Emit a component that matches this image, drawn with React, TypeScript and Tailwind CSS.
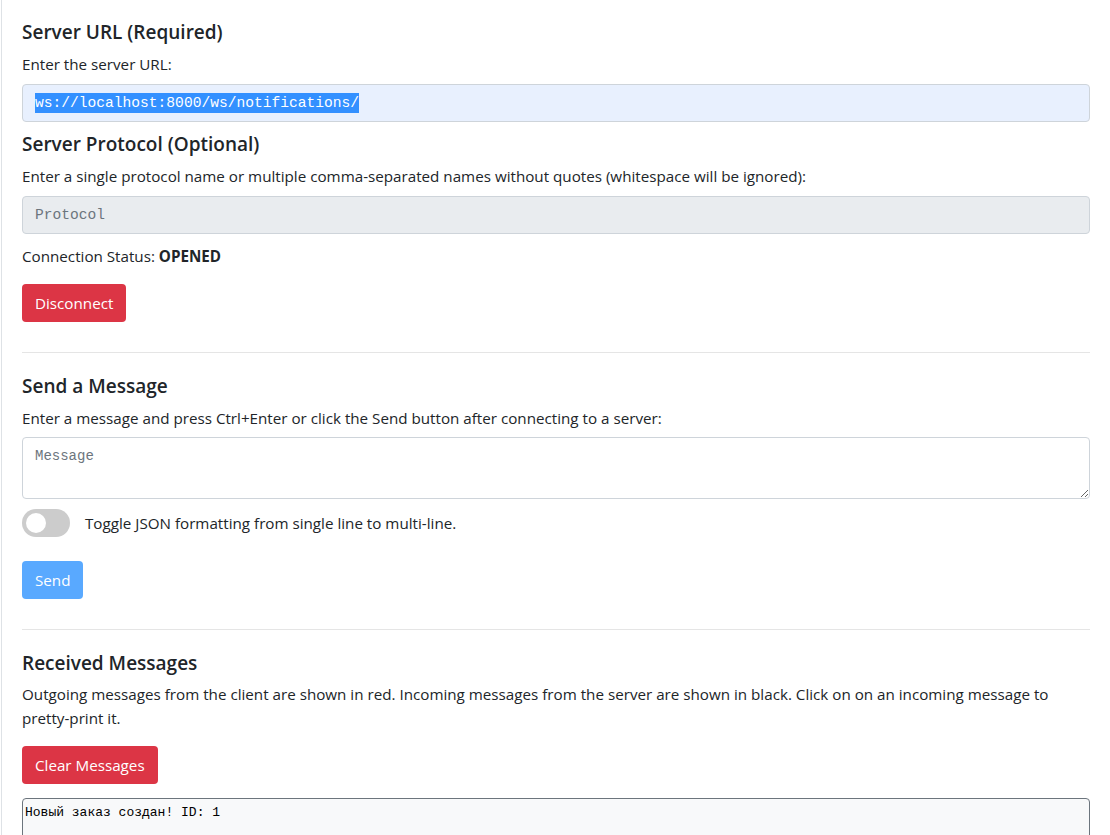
import React from 'react';

const sans = "font-['Open_Sans',sans-serif]";

function Heading({ children, className = '' }: { children: React.ReactNode; className?: string }) {
  return (
    <h5 className={`text-[19px] font-semibold leading-[24px] text-[#212529] ${className}`}>{children}</h5>
  );
}

function Divider() {
  return <hr className="mt-[30px] mb-[21px] border-0 border-t border-[#e5e5e5]" />;
}

export default function App() {
  return (
    <div className={`min-h-[835px] bg-white text-[15.2px] leading-[24px] text-[#212529] ${sans}`}>
      <div className="ml-px border-l border-[#dee2e6] pl-[20px] pr-[20px] pt-[20px] min-h-[835px]">
        {/* server url */}
        <Heading>Server URL (Required)</Heading>
        <p className="mt-[8px] mb-[8px]">Enter the server URL:</p>
        <div className="flex h-[38px] items-center rounded border border-[#ced4da] bg-[#e8f0fe] px-[12px] font-['Liberation_Mono',monospace] text-[14.6px]">
          <span className="bg-[#3390ff] text-white leading-[20px]">ws://localhost:8000/ws/notifications/</span>
        </div>

        <Heading className="mt-[10px]">Server Protocol (Optional)</Heading>
        <p className="mt-[8px] mb-[8px]">
          Enter a single protocol name or multiple comma-separated names without quotes (whitespace will be ignored):
        </p>
        <div className="flex h-[38px] items-center rounded border border-[#ced4da] bg-[#e9ecef] px-[12px] font-['Liberation_Mono',monospace] text-[14.6px] text-[#6c757d]">
          Protocol
        </div>

        <p className="mt-[10px] mb-[16px]">
          Connection Status: <b className="font-bold">OPENED</b>
        </p>
        <button
          type="button"
          className="h-[38px] rounded bg-[#dc3545] px-[13px] text-white"
        >
          Disconnect
        </button>

        <Divider />

        {/* send */}
        <Heading>Send a Message</Heading>
        <p className="mt-[8px] mb-[7px]">
          Enter a message and press Ctrl+Enter or click the Send button after connecting to a server:
        </p>
        <textarea
          rows={2}
          placeholder="Message"
          className="block h-[62px] w-full rounded border border-[#ced4da] bg-white px-[12px] py-[6px] font-['Liberation_Mono',monospace] text-[14px] leading-[24px] placeholder:text-[#6c757d] outline-none"
        />
        <div className="mt-[10px] flex items-center gap-[15px]">
          <div className="flex h-[28px] w-[48px] items-center rounded-full bg-[#cccccc] px-[4px]">
            <div className="h-[20px] w-[20px] rounded-full bg-white" />
          </div>
          <span>Toggle JSON formatting from single line to multi-line.</span>
        </div>
        <button
          type="button"
          className="mt-[24px] h-[38px] rounded bg-[#59a9ff] px-[13px] text-white"
        >
          Send
        </button>

        <Divider />

        {/* received */}
        <Heading>Received Messages</Heading>
        <p className="mt-[7px] mb-[16px]">
          Outgoing messages from the client are shown in red. Incoming messages from the server are shown in black. Click on on an incoming message to pretty-print it.
        </p>
        <button
          type="button"
          className="h-[38px] rounded bg-[#dc3545] px-[13px] text-white"
        >
          Clear Messages
        </button>
        <div className="mt-[14px] h-[300px] rounded border border-[#6c757d] bg-[#f8f9fa] px-[2px] pt-[2px] font-['Liberation_Mono',monospace] text-[13px] leading-[24px] text-black">
          <div>Новый заказ создан! ID: 1</div>
        </div>
      </div>
    </div>
  );
}
